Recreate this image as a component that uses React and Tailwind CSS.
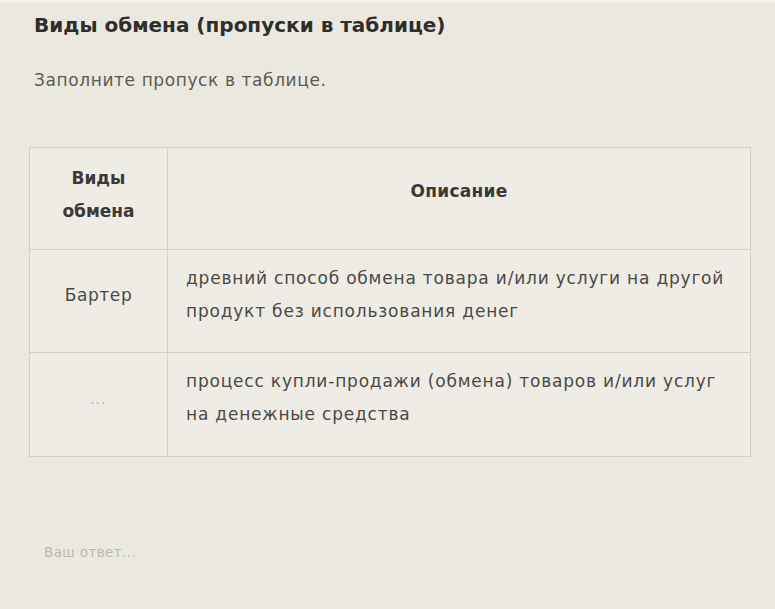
import React from "react";

const rows = [
  {
    kind: "Бартер",
    text: "древний способ обмена товара и/или услуги на другой продукт без использования денег",
  },
  {
    kind: "...",
    text: "процесс купли-продажи (обмена) товаров и/или услуг на денежные средства",
    blank: true,
  },
];

export default function App() {
  return (
    <div
      className="w-[775px] h-[609px] overflow-hidden bg-[#ebe8e0] text-[#3b3a37]"
      style={{ fontFamily: '"DejaVu Sans", "Open Sans", sans-serif' }}
    >
      <div className="h-[3px] bg-[#f3f1ec]" />
      <div className="pl-[34px] pt-[7px]">
        <h1 className="text-[20px] font-bold leading-[30px] text-[#2f2e2b]">
          Виды обмена (пропуски в таблице)
        </h1>
        <p className="mt-[28px] text-[17px] tracking-[0.6px] leading-[24px] text-[#5b5a55]">
          Заполните пропуск в таблице.
        </p>
      </div>

      {/* table */}
      <div className="ml-[29px] mt-[55px] w-[722px] border border-[#d3d0c8] bg-[#eeece5] grid grid-cols-[138px_1fr]">
        <div className="h-[102px] border-r border-b border-[#d3d0c8] flex flex-col items-center justify-center pb-[8px] text-[17px] leading-[33px] font-bold text-[#3a3936]">
          <span>Виды</span>
          <span>обмена</span>
        </div>
        <div className="h-[102px] border-b border-[#d3d0c8] flex justify-center pt-[27px] text-[17px] tracking-[0.3px] leading-[33px] font-bold text-[#3a3936]">
          Описание
        </div>
        {rows.map((r, i) => (
          <React.Fragment key={i}>
            <div
              className={
                "h-[103px] border-r border-[#d3d0c8] flex items-center justify-center pb-[10px] " +
                (i === 0 ? "border-b " : "") +
                (r.blank
                  ? "text-[12px] tracking-[1.5px] text-[#a8a69f]"
                  : "text-[17px] tracking-[0.6px] text-[#4a4945]")
              }
            >
              {r.kind}
            </div>
            <div
              className={
                "h-[103px] pl-[18px] pr-[20px] pt-[12px] text-[17px] tracking-[0.8px] leading-[33px] text-[#4a4945] " +
                (i === 0 ? "border-b border-[#d3d0c8]" : "")
              }
            >
              {r.text}
            </div>
          </React.Fragment>
        ))}
      </div>

      <div className="pl-[44px] mt-[85px] text-[13.5px] tracking-[0.4px] text-[#bab8b1]">Ваш ответ...</div>
    </div>
  );
}
